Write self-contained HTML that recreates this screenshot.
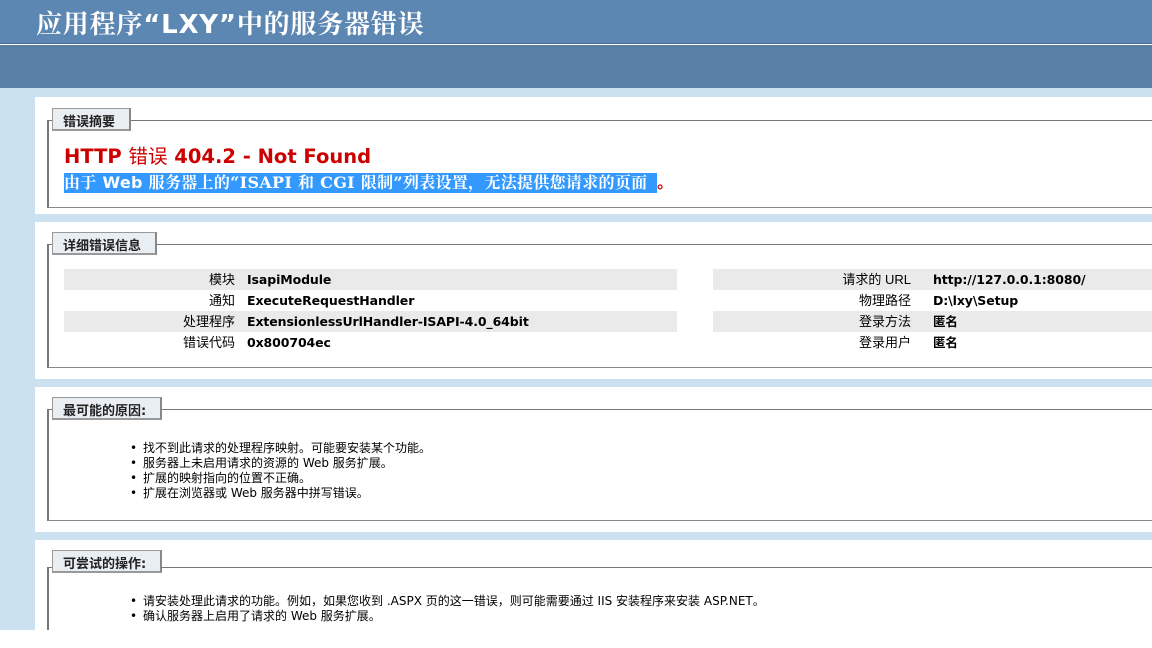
<!DOCTYPE html>
<html><head><meta charset="utf-8"><style>
*{margin:0;padding:0;box-sizing:border-box}
body{width:1152px;height:648px;background:#fff;position:relative;overflow:hidden;font-family:"DejaVu Sans","Noto Sans CJK SC",sans-serif;font-size:12px;color:#000}
.a{position:absolute}
#h1{left:0;top:0;width:1152px;height:44px;background:#5C87B2;border-bottom:1px solid #4a6d93}
#h1 span{position:absolute;left:36px;top:4px;color:#fff;font-size:26px;font-family:"DejaVu Sans","Noto Serif CJK SC",serif;font-weight:bold;letter-spacing:0.8px;white-space:nowrap}
#h2{left:0;top:45px;width:1152px;height:43px;background:#5A7FA5}
#bg{left:0;top:88px;width:1152px;height:542px;background:#CBE1EF}
.box{position:absolute;left:35px;width:1117px;background:#fff}
.fs{position:absolute;left:47px;width:1110px;border:1px solid #888;border-left:2px solid #777;border-top:1px solid #777}
.lg{position:absolute;left:52px;height:23px;background:#E9EEF2;border:1px solid #999;border-right:2px solid #888;border-bottom:2px solid #999;font-weight:bold;font-size:13px;padding:2px 0 0 10px;color:#222;white-space:nowrap}
.row{position:absolute;height:21px;line-height:21px;font-size:13px;white-space:nowrap}
.g{background:#EAEAEA}
.lb{position:absolute;text-align:right;font-family:"Liberation Sans","Noto Sans CJK SC",sans-serif}
.v{position:absolute;font-weight:bold;font-size:12.5px;letter-spacing:-0.1px}
ul{position:absolute;left:143px;list-style:none;font-size:12px;line-height:15px;white-space:nowrap}
ul li:before{content:"•";position:absolute;left:-13px}
ul li{position:relative}
</style></head><body>
<div class="a" id="h1"><span>应用程序“LXY”中的服务器错误</span></div>
<div class="a" id="h2"></div>
<div class="a" id="bg"></div>

<div class="box" style="top:97px;height:117px"></div>
<div class="fs" style="top:120px;height:88px"></div>
<div class="lg" style="top:108px;width:79px">错误摘要</div>
<div class="a" style="left:64px;top:140px;font-size:19.5px;font-weight:bold;color:#CC0000;white-space:nowrap">HTTP <span style="font-weight:normal">错误</span> 404.2 - Not Found</div>
<div class="a" style="left:64px;top:173px;width:593px;font-size:16px;font-weight:bold;color:#fff;background:#3399FF;height:20px;line-height:20px;white-space:nowrap;letter-spacing:0.3px;overflow:hidden;font-family:'DejaVu Serif','Noto Serif CJK SC',serif">由于 <span style="font-family:'DejaVu Sans'">Web</span> 服务器上的“ISAPI 和 CGI 限制”列表设置，无法提供您请求的页面</div>
<div class="a" style="left:657px;top:173px;font-size:16px;font-weight:bold;color:#CC0000;line-height:20px">。</div>

<div class="box" style="top:222px;height:157px"></div>
<div class="fs" style="top:244px;height:124px"></div>
<div class="lg" style="top:232px;width:105px">详细错误信息</div>
<div class="row g" style="left:64px;top:269px;width:613px"></div>
<div class="row g" style="left:64px;top:311px;width:613px"></div>
<div class="row g" style="left:713px;top:269px;width:439px"></div>
<div class="row g" style="left:713px;top:311px;width:439px"></div>
<div class="row" style="left:0;top:269px;width:1152px"><span class="lb" style="right:917px">模块</span><span class="v" style="left:247px">IsapiModule</span><span class="lb" style="right:241px">请求的 URL</span><span class="v" style="left:933px">http://127.0.0.1:8080/</span></div>
<div class="row" style="left:0;top:290px;width:1152px"><span class="lb" style="right:917px">通知</span><span class="v" style="left:247px">ExecuteRequestHandler</span><span class="lb" style="right:241px">物理路径</span><span class="v" style="left:933px">D:\lxy\Setup</span></div>
<div class="row" style="left:0;top:311px;width:1152px"><span class="lb" style="right:917px">处理程序</span><span class="v" style="left:247px">ExtensionlessUrlHandler-ISAPI-4.0_64bit</span><span class="lb" style="right:241px">登录方法</span><span class="v" style="left:933px">匿名</span></div>
<div class="row" style="left:0;top:332px;width:1152px"><span class="lb" style="right:917px">错误代码</span><span class="v" style="left:247px">0x800704ec</span><span class="lb" style="right:241px">登录用户</span><span class="v" style="left:933px">匿名</span></div>

<div class="box" style="top:387px;height:145px"></div>
<div class="fs" style="top:409px;height:112px"></div>
<div class="lg" style="top:397px;width:110px">最可能的原因:</div>
<ul style="top:441px">
<li>找不到此请求的处理程序映射。可能要安装某个功能。</li>
<li>服务器上未启用请求的资源的 Web 服务扩展。</li>
<li>扩展的映射指向的位置不正确。</li>
<li>扩展在浏览器或 Web 服务器中拼写错误。</li>
</ul>

<div class="box" style="top:540px;height:90px"></div>
<div class="fs" style="top:567px;height:80px;border-bottom:none"></div>
<div class="lg" style="top:550px;width:110px">可尝试的操作:</div>
<ul style="top:594px">
<li>请安装处理此请求的功能。例如，如果您收到 .ASPX 页的这一错误，则可能需要通过 IIS 安装程序来安装 ASP.NET。</li>
<li>确认服务器上启用了请求的 Web 服务扩展。</li>
</ul>
<div class="a" style="left:0;top:630px;width:1152px;height:18px;background:#fff"></div>
</body></html>
